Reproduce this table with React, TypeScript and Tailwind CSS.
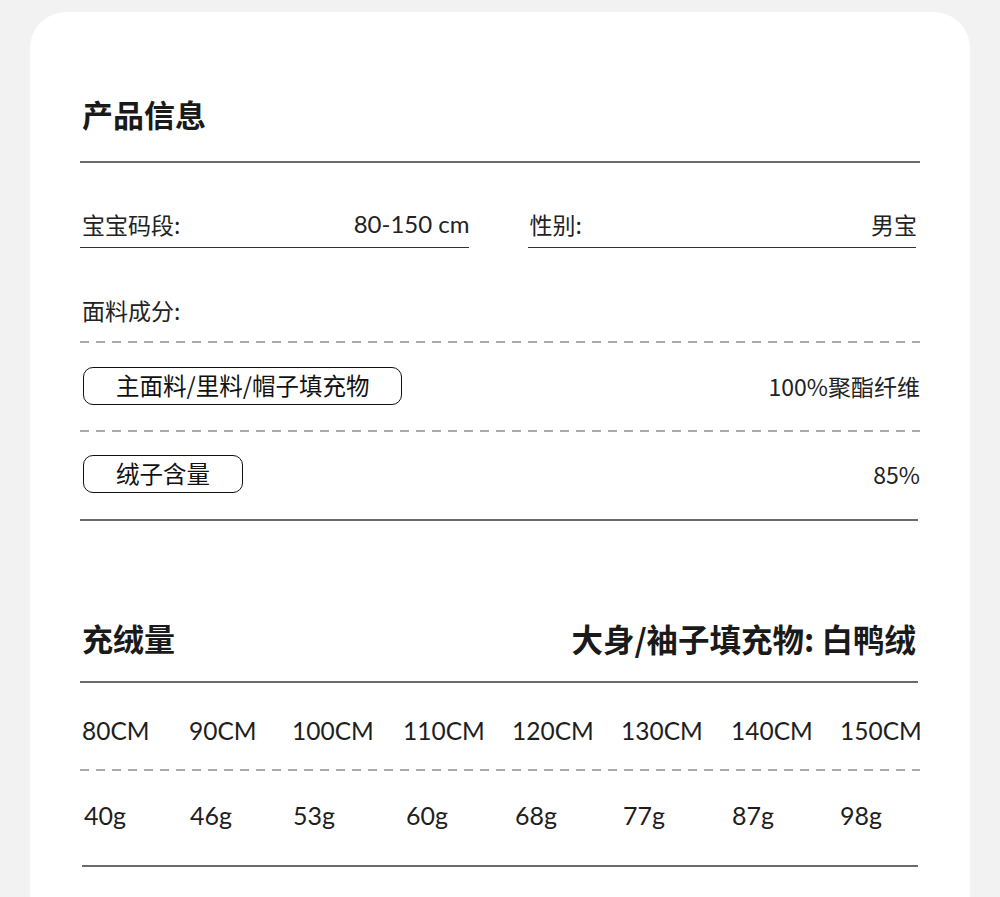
const cjk = "font-['Noto_Sans_CJK_SC',sans-serif]"
const geo = "font-['Lato','Noto_Sans_CJK_SC',sans-serif]"

const SIZES = ['80CM', '90CM', '100CM', '110CM', '120CM', '130CM', '140CM', '150CM']
const GRAMS = ['40g', '46g', '53g', '60g', '68g', '77g', '87g', '98g']

export default function App() {
  return (
    <div className="min-h-[897px] bg-[#f2f2f2] px-[30px] pt-[12px]">
      <div className={`min-h-[885px] rounded-t-[36px] bg-white px-[50px] pb-10 text-[#222] ${cjk}`}>
        {/* 产品信息 */}
        <h1 className="pt-[82px] pl-[2px] text-[31px] font-bold leading-[40px] text-[#1a1a1a]">产品信息</h1>
        <SolidLine className="mt-[27px]" />

        <div className="mt-[46px] grid w-[836px] grid-cols-2 gap-[59px]">
          <InfoCell label="宝宝码段:" value="80-150 cm" valueFont={`${geo} text-[24px]`} />
          <InfoCell label="性别:" value="男宝" />
        </div>

        <div className="mt-[47px] pl-[2px] text-[23px] leading-[30px]">面料成分:</div>
        <DashedLine className="mt-[16px]" />

        <MaterialRow tag="主面料/里料/帽子填充物" value="100%聚酯纤维" className="mt-[24px]" />
        <DashedLine className="mt-[25px]" />
        <MaterialRow tag="绒子含量" value="85%" className="mt-[23px]" />
        <SolidLine className="mt-[26px] w-[838px]" />

        {/* 充绒量 */}
        <div className="mt-[97px] flex items-center justify-between pl-[2px] pr-[4px] leading-[40px] font-bold text-[#1a1a1a]">
          <h2 className="text-[31px]">充绒量</h2>
          <span className="text-[31.5px]">大身/袖子填充物: 白鸭绒</span>
        </div>
        <SolidLine className="mt-[23px] w-[838px]" />

        <div className={`mt-[33px] grid grid-cols-[107px_103px_111px_109px_109px_110px_109px_1fr] pl-[2px] text-[24.5px] leading-[30px] text-[#1e1e1e] ${geo}`}>
          {SIZES.map(s => <span key={s}>{s}</span>)}
        </div>
        <DashedLine className="mt-[23px]" />
        <div className={`mt-[29px] grid grid-cols-[106px_103px_113px_109px_108px_109px_108px_1fr] pl-[4px] text-[25px] leading-[30px] text-[#1e1e1e] ${geo}`}>
          {GRAMS.map(g => <span key={g}>{g}</span>)}
        </div>
        <SolidLine className="mt-[35px] ml-[2px] w-[836px]" />
      </div>
    </div>
  )
}

function InfoCell({ label, value, valueFont }: { label: string; value: string; valueFont?: string }) {
  return (
    <div className="border-b border-[#333] pb-[8px]">
      <div className="flex items-center justify-between pl-[2px] text-[23px] leading-[30px]">
        <span>{label}</span>
        <span className={`-mr-[1px] ${valueFont ?? ''}`}>{value}</span>
      </div>
    </div>
  )
}

function MaterialRow({ tag, value, className = '' }: { tag: string; value: string; className?: string }) {
  return (
    <div className={`flex items-center justify-between pl-[3px] ${className}`}>
      <span className="flex h-[38px] items-center rounded-[10px] border border-[#111] px-[32px] text-[23.5px] leading-none text-[#111]">
        {tag}
      </span>
      <span className="text-[23px] leading-[30px]">{value}</span>
    </div>
  )
}

function SolidLine({ className = '' }: { className?: string }) {
  return <div className={`h-[2px] bg-[#6a6a6a] ${className}`} />
}

function DashedLine({ className = '' }: { className?: string }) {
  return (
    <div
      className={`h-[2px] w-[840px] bg-[repeating-linear-gradient(to_right,#aaa_0,#aaa_9px,transparent_9px,transparent_16px)] ${className}`}
    />
  )
}
